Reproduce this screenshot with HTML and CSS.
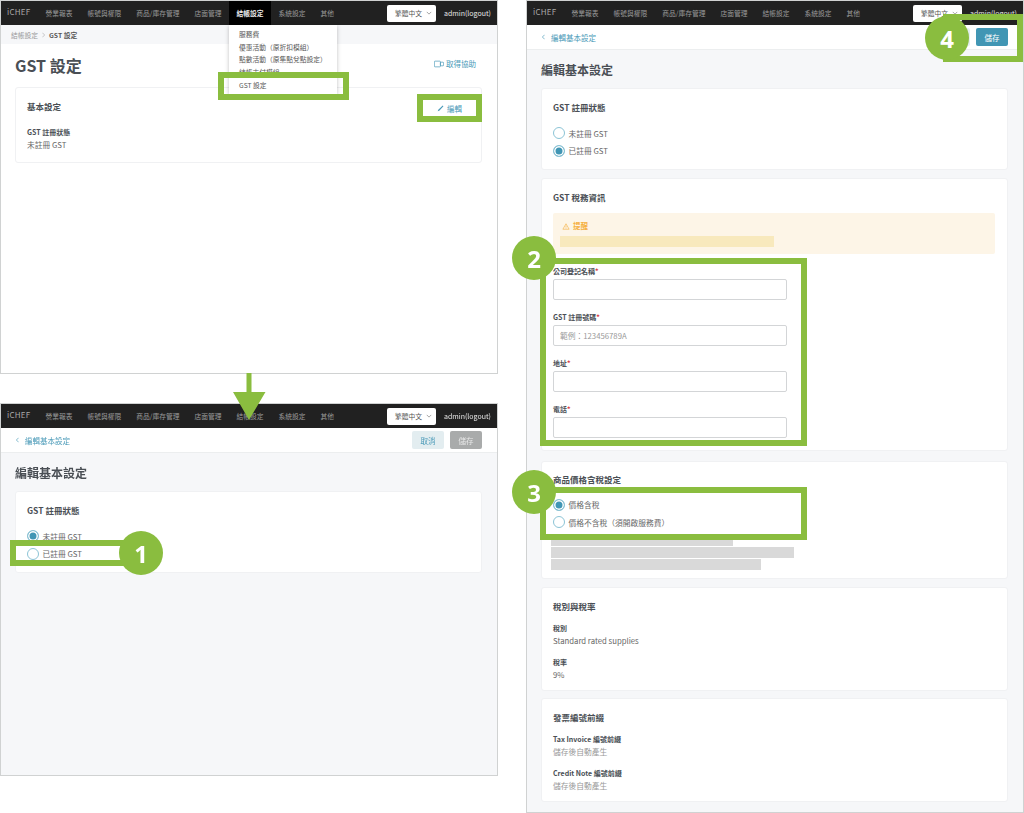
FILE: index.html
```html
<!DOCTYPE html>
<html lang="zh-Hant">
<head>
    <meta charset="UTF-8">
    <title>GST 設定</title>
    <link rel="stylesheet" href="styles.css">
</head>
<body>
<div class="canvas">

    <!-- window 1: settings page -->
    <div class="window win-list">
        <div class="topbar">
            <span class="logo">iCHEF</span>
            <nav class="nav">
                <a>營業報表</a><a>帳號與權限</a><a>商品/庫存管理</a><a>店面管理</a><a class="active">結帳設定</a><a>系統設定</a><a>其他</a>
            </nav>
            <div class="lang">繁體中文<svg class="chev" viewBox="0 0 8 5"><path d="M1 1l3 3 3-3" fill="none" stroke="#888" stroke-width="1"/></svg></div>
            <span class="admin">admin(logout)</span>
        </div>
        <div class="crumbs"><span>結帳設定</span><svg class="crumb-sep" viewBox="0 0 4 8"><path d="M0.500 1l3 3-3 3" fill="none" stroke="#999" stroke-width="0.700"/></svg><b>GST 設定</b></div>
        <div class="content content-white">
            <div class="title-row">
                <h1 class="big">GST 設定</h1>
                <a class="help">
                    <svg viewBox="0 0 14 10" class="help-icon"><rect x="0.500" y="1" width="8.500" height="8" rx="1" fill="none" stroke="#4a9ab8"/><rect x="9" y="2.500" width="4.500" height="5" rx="1" fill="none" stroke="#4a9ab8"/></svg>
                    取得協助
                </a>
            </div>
            <div class="card card-basic">
                <h2>基本設定</h2>
                <div class="field first"><label>GST 註冊狀態</label><p>未註冊 GST</p></div>
            </div>
        </div>
    </div>

    <div class="dropdown">
        <a>服務費</a><a>優惠活動（原折扣模組）</a><a>點數活動（原集點兌點設定）</a><a>結帳支付模組</a><a>GST 設定</a>
    </div>
    <a class="edit-btn">
        <svg viewBox="0 0 10 10" class="edit-icon"><path d="M1 9l0.800-2.200L8.200 0.800 9.200 1.800 3.200 8.200z" fill="#4a9ab8"/></svg>
        編輯
    </a>

    <!-- window 2: edit, not registered -->
    <div class="window win-edit">
        <div class="topbar">
            <span class="logo">iCHEF</span>
            <nav class="nav">
                <a>營業報表</a><a>帳號與權限</a><a>商品/庫存管理</a><a>店面管理</a><a>結帳設定</a><a>系統設定</a><a>其他</a>
            </nav>
            <div class="lang">繁體中文<svg class="chev" viewBox="0 0 8 5"><path d="M1 1l3 3 3-3" fill="none" stroke="#888" stroke-width="1"/></svg></div>
            <span class="admin">admin(logout)</span>
        </div>
        <div class="subbar">
            <a class="back"><svg class="back-icon" viewBox="0 0 4 8"><path d="M3.500 1l-3 3 3 3" fill="none" stroke="#4a9ab8" stroke-width="0.900"/></svg>編輯基本設定</a>
            <div class="actions"><button class="btn btn-cancel">取消</button><button class="btn btn-off">儲存</button></div>
        </div>
        <div class="content">
            <h1 class="mid">編輯基本設定</h1>
            <div class="card card-status">
                <h2>GST 註冊狀態</h2>
                <div class="radios">
                    <div class="radio on">未註冊 GST</div>
                    <div class="radio">已註冊 GST</div>
                </div>
            </div>
        </div>
    </div>

    <!-- window 3: edit, registered -->
    <div class="window win-form">
        <div class="topbar">
            <span class="logo">iCHEF</span>
            <nav class="nav">
                <a>營業報表</a><a>帳號與權限</a><a>商品/庫存管理</a><a>店面管理</a><a>結帳設定</a><a>系統設定</a><a>其他</a>
            </nav>
            <div class="lang">繁體中文<svg class="chev" viewBox="0 0 8 5"><path d="M1 1l3 3 3-3" fill="none" stroke="#888" stroke-width="1"/></svg></div>
            <span class="admin">admin(logout)</span>
        </div>
        <div class="subbar">
            <a class="back"><svg class="back-icon" viewBox="0 0 4 8"><path d="M3.500 1l-3 3 3 3" fill="none" stroke="#4a9ab8" stroke-width="0.900"/></svg>編輯基本設定</a>
            <div class="actions"><button class="btn btn-cancel"></button><button class="btn btn-save">儲存</button></div>
        </div>
        <div class="content">
            <h1 class="mid">編輯基本設定</h1>
            <div class="card card-status">
                <h2>GST 註冊狀態</h2>
                <div class="radios">
                    <div class="radio">未註冊 GST</div>
                    <div class="radio on">已註冊 GST</div>
                </div>
            </div>
            <div class="card card-tax">
                <h2>GST 稅務資訊</h2>
                <div class="alert">
                    <div class="alert-head"><svg class="warn-icon" viewBox="0 0 10 9"><path d="M5 1l4 7H1z M5 3.500v2.500 M5 6.800v0.500" fill="none" stroke="#f5b041" stroke-width="0.800"/></svg>提醒</div>
                    <div class="alert-bar"></div>
                </div>
                <div class="form-row"><label>公司登記名稱<em>*</em></label><div class="input"></div></div>
                <div class="form-row"><label>GST 註冊號碼<em>*</em></label><div class="input">範例：123456789A</div></div>
                <div class="form-row"><label>地址<em>*</em></label><div class="input"></div></div>
                <div class="form-row"><label>電話<em>*</em></label><div class="input"></div></div>
            </div>
            <div class="card card-price">
                <h2>商品價格含稅設定</h2>
                <div class="radios">
                    <div class="radio on">價格含稅</div>
                    <div class="radio">價格不含稅（須開啟服務費）</div>
                </div>
                <div class="mask mask-1"></div>
                <div class="mask mask-2"></div>
                <div class="mask mask-3"></div>
            </div>
            <div class="card card-rate">
                <h2>稅別與稅率</h2>
                <div class="field"><label>稅別</label><p>Standard rated supplies</p></div>
                <div class="field"><label>稅率</label><p>9%</p></div>
            </div>
            <div class="card card-rate">
                <h2>發票編號前綴</h2>
                <div class="field"><label>Tax Invoice 編號前綴</label><p class="muted">儲存後自動產生</p></div>
                <div class="field"><label>Credit Note 編號前綴</label><p class="muted">儲存後自動產生</p></div>
            </div>
        </div>
    </div>

    <!-- green annotations drawn over the screenshots -->
    <div class="mark mark-menu"></div>
    <div class="mark mark-edit"></div>
    <div class="mark mark-one"></div>
    <div class="mark mark-two"></div>
    <div class="mark mark-three"></div>
    <div class="mark mark-four"></div>
    <div class="num num-1">1</div>
    <div class="num num-2">2</div>
    <div class="num num-3">3</div>
    <div class="num num-4">4</div>
    <svg class="arrow" viewBox="0 0 34 48"><path d="M14.500 0h5v19h14L17 47 1 19h13.500z" fill="#8abd3f"/></svg>
</div>
</body>
</html>
```

FILE: styles.css
```css
* {
    box-sizing: border-box;
}
body {
    margin: 0;
    background-color: #fff;
    font-family: "Noto Sans CJK TC", "Noto Sans", sans-serif;
    color: #4a4f55;
    overflow: hidden;
}
h1, h2, p {
    margin: 0;
}
/* the source is a scaled down screenshot, so everything is slightly soft */
.canvas {
    position: relative;
    width: 1024px;
    height: 813px;
    overflow: hidden;
    filter: blur(0.3px);
}
.window {
    position: absolute;
    display: flex;
    flex-direction: column;
    background-color: #f6f7f9;
    border: 1px solid #d0d2d2;
    overflow: hidden;
}
.win-list {
    left: 0;
    top: 0;
    width: 498px;
    height: 374px;
}
.win-edit {
    left: 0;
    top: 403px;
    width: 498px;
    height: 373px;
}
.win-form {
    left: 526px;
    top: 0;
    width: 498px;
    height: 813px;
}
.topbar {
    display: flex;
    align-items: center;
    flex: none;
    height: 24px;
    background-color: #212121;
    padding-left: 6px;
}
.logo {
    width: 31px;
    margin-top: -3px;
    font-size: 8px;
    letter-spacing: 0.2px;
    color: #aaa;
}
.nav {
    display: flex;
    height: 100%;
}
.nav a {
    display: flex;
    align-items: center;
    padding: 0 7.500px;
    font-size: 6.750px;
    color: #9a9a9a;
}
.nav a.active {
    background-color: #000;
    color: #eee;
    font-weight: 700;
}
.lang {
    display: flex;
    align-items: center;
    justify-content: space-between;
    width: 49px;
    height: 17px;
    margin-left: auto;
    padding: 0 4px 0 8px;
    background-color: #fff;
    border-radius: 2px;
    font-size: 6.750px;
    color: #555;
}
.chev {
    width: 6px;
    height: 4px;
}
.admin {
    width: 53px;
    margin-left: 8px;
    font-size: 7px;
    color: #e6e6e6;
    white-space: nowrap;
}
.crumbs {
    display: flex;
    align-items: center;
    gap: 4px;
    flex: none;
    height: 19px;
    padding-left: 10px;
    font-size: 6.750px;
    color: #999;
}
.crumbs b {
    color: #555;
}
.crumb-sep {
    width: 3px;
    height: 6px;
}
.subbar {
    display: flex;
    align-items: center;
    justify-content: space-between;
    flex: none;
    height: 25px;
    padding: 0 15px;
    background-color: #fff;
    border-bottom: 1px solid #eceeef;
}
.back {
    display: flex;
    align-items: center;
    gap: 6px;
    font-size: 7.500px;
    color: #4a9ab8;
}
.back-icon {
    width: 3px;
    height: 6px;
}
.actions {
    display: flex;
    gap: 6px;
}
.btn {
    width: 32px;
    height: 18px;
    padding: 0;
    border: none;
    border-radius: 2px;
    font-family: inherit;
    font-size: 7.500px;
}
.btn-cancel {
    background-color: #e3edf0;
    color: #4a9ab8;
}
.btn-off {
    background-color: #a9abab;
    color: #e8e8e8;
}
.btn-save {
    background-color: #4196b4;
    color: #fff;
}
.content {
    flex: 1;
    padding: 0 15px 0 14px;
}
.content-white {
    background-color: #fff;
}
.title-row {
    display: flex;
    align-items: center;
    justify-content: space-between;
    height: 42px;
    padding: 0 6px 0 0;
}
.big {
    font-size: 16px;
    font-weight: 700;
    color: #4a4f55;
}
.help {
    display: flex;
    align-items: center;
    gap: 2px;
    margin-top: -3px;
    font-size: 7.500px;
    color: #4a9ab8;
}
.help-icon {
    width: 10px;
    height: 8px;
}
.mid {
    height: 38px;
    padding-top: 11px;
    font-size: 12px;
    font-weight: 700;
    line-height: 18px;
    color: #4a4f55;
}
.card {
    position: relative;
    margin-bottom: 8px;
    padding: 12px 12px 12px 11px;
    background-color: #fff;
    border: 1px solid #f0f1f3;
    border-radius: 3px;
}
.card h2 {
    font-size: 8.500px;
    font-weight: 700;
    line-height: 13px;
}
.card-basic {
    height: 76px;
    margin-top: 1px;
}
.card-status {
    height: 82px;
}
.card-tax {
    height: 273px;
    margin-bottom: 10px;
}
.card-price {
    height: 118px;
    padding-top: 11px;
}
.card-rate {
    height: 104px;
    margin-bottom: 7px;
}
.field {
    margin-top: 10px;
}
.field.first {
    margin-top: 14px;
}
.field label {
    display: block;
    font-size: 7px;
    font-weight: 700;
    line-height: 10px;
}
.field p {
    margin-top: 2px;
    font-size: 7.750px;
    line-height: 12px;
    color: #666;
}
.field p.muted {
    color: #999;
    font-size: 7.750px;
}
.radios {
    display: flex;
    flex-direction: column;
    gap: 7.500px;
    margin-top: 14px;
}
.card-price .radios {
    margin-top: 13.500px;
}
.radio {
    display: flex;
    align-items: center;
    gap: 3.500px;
    height: 10px;
    font-size: 7.750px;
    color: #666;
}
.radio::before {
    content: "";
    flex: none;
    width: 10px;
    height: 10px;
    border: 1px solid #8cc4d6;
    border-radius: 50%;
    background-color: #fff;
}
.radio.on::before {
    background-color: #4196b4;
    box-shadow: inset 0 0 0 1.500px #fff;
}
.alert {
    height: 41px;
    margin-top: 9px;
    padding: 7px 7px 0;
    background-color: #fdf5e7;
    border-radius: 2px;
}
.alert-head {
    display: flex;
    align-items: center;
    gap: 3px;
    padding-left: 2px;
    font-size: 7.500px;
    font-weight: 700;
    line-height: 12px;
    color: #f5b041;
}
.warn-icon {
    width: 8px;
    height: 7px;
}
.alert-bar {
    width: 214px;
    height: 11px;
    margin-top: 4px;
    background-color: #f8e9bd;
}
.form-row {
    margin-bottom: 12px;
}
.alert + .form-row {
    margin-top: 12px;
}
.form-row label {
    display: block;
    height: 13px;
    font-size: 7px;
    font-weight: 700;
    line-height: 10px;
}
.form-row em {
    color: #d9363e;
    font-style: normal;
}
.input {
    display: flex;
    align-items: center;
    width: 234px;
    height: 21px;
    padding-left: 6px;
    background-color: #fff;
    border: 1px solid #d3d5d7;
    border-radius: 2px;
    font-size: 7.750px;
    color: #999;
}
.mask {
    position: absolute;
    left: 9px;
    height: 11px;
    background-color: #d9d9d9;
}
.mask-1 {
    top: 73px;
    width: 182px;
}
.mask-2 {
    top: 85px;
    width: 243px;
}
.mask-3 {
    top: 97px;
    width: 210px;
}
.dropdown {
    position: absolute;
    left: 229px;
    top: 25px;
    display: flex;
    flex-direction: column;
    width: 108px;
    height: 69px;
    padding: 3px 10px 0;
    background-color: #fff;
    box-shadow: 0 1px 4px rgba(0,0,0,0.25);
    overflow: hidden;
}
.dropdown a {
    flex: none;
    height: 12.700px;
    font-size: 6.750px;
    line-height: 12.700px;
    white-space: nowrap;
    color: #555;
}
.edit-btn {
    position: absolute;
    left: 423px;
    top: 100px;
    display: flex;
    align-items: center;
    justify-content: center;
    gap: 3px;
    width: 53px;
    height: 16px;
    background-color: #fff;
    font-size: 7.500px;
    color: #4a9ab8;
}
.edit-icon {
    width: 7px;
    height: 7px;
}
.mark {
    position: absolute;
    border: 6px solid #8abd3f;
}
.mark-menu {
    left: 218px;
    top: 72px;
    width: 131px;
    height: 28px;
}
.mark-edit {
    left: 417px;
    top: 94px;
    width: 65px;
    height: 28px;
}
.mark-one {
    left: 10px;
    top: 540px;
    width: 120px;
    height: 26px;
}
.mark-two {
    left: 540px;
    top: 258px;
    width: 267px;
    height: 188px;
}
.mark-three {
    left: 540px;
    top: 487px;
    width: 267px;
    height: 53px;
}
.mark-four {
    left: 943px;
    top: 14px;
    width: 80px;
    height: 48px;
}
.num {
    position: absolute;
    display: flex;
    align-items: center;
    justify-content: center;
    width: 44px;
    height: 44px;
    background-color: #8abd3f;
    border-radius: 50%;
    font-family: "Noto Sans", sans-serif;
    font-size: 24px;
    font-weight: 700;
    color: #fff;
}
.num-1 {
    left: 119px;
    top: 531px;
}
.num-2 {
    left: 512px;
    top: 236px;
}
.num-3 {
    left: 512px;
    top: 470px;
}
.num-4 {
    left: 925px;
    top: 16px;
}
.arrow {
    position: absolute;
    left: 232px;
    top: 373px;
    width: 34px;
    height: 48px;
}
```
